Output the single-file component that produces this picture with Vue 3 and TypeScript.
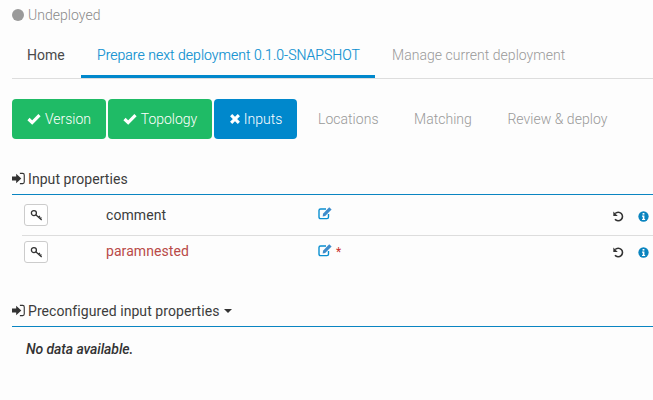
<template>
  <div class="page">
    <div class="status">
      <span class="status-dot"></span>
      <span>Undeployed</span>
    </div>

    <!-- Main tabs -->
    <nav class="tabs">
      <a
        v-for="tab in tabs"
        :key="tab.label"
        class="tab"
        :class="tab.state"
      >{{ tab.label }}</a>
    </nav>

    <!-- Wizard steps -->
    <div class="steps">
      <button class="step done">
        <svg class="step-icon" viewBox="0 0 14 14"><path d="M1.5 7 L5.2 10.6 L12.5 3.2" /></svg>Version
      </button>
      <button class="step done">
        <svg class="step-icon" viewBox="0 0 14 14"><path d="M1.5 7 L5.2 10.6 L12.5 3.2" /></svg>Topology
      </button>
      <button class="step current">
        <svg class="step-icon small" viewBox="0 0 14 14"><path d="M2.5 2.5 L11.5 11.5 M11.5 2.5 L2.5 11.5" /></svg>Inputs
      </button>
      <span v-for="name in pending" :key="name" class="step-pending">{{ name }}</span>
    </div>

    <!-- Input properties -->
    <h3 class="section-title">
      <svg class="signin" viewBox="0 0 14 14">
        <path class="arrow" d="M0 4.8 H4.5 V1.8 L10 7 L4.5 12.2 V9.2 H0 Z" />
        <path class="frame" d="M8.5 1.5 H11.5 Q13.2 1.5 13.2 3.2 V10.8 Q13.2 12.5 11.5 12.5 H8.5" />
      </svg>
      Input properties
    </h3>
    <div class="props">
      <div v-for="prop in props" :key="prop.name" class="prop-row">
        <span class="key-btn">
          <svg viewBox="0 0 14 14" class="key-icon">
            <circle cx="4.2" cy="4.4" r="2.7" />
            <path d="M6.2 6.3 L12.6 11.8 M9.2 8.9 L10.7 7.6 M11 10.4 L12.3 9.2" />
          </svg>
        </span>
        <span class="prop-name" :class="{ required: prop.required }">{{ prop.name }}</span>
        <span class="prop-edit">
          <svg viewBox="0 0 15 14" class="edit-icon">
            <path class="box" d="M10.5 8 V11 Q10.5 12.6 9 12.6 H2.6 Q1 12.6 1 11 V4.6 Q1 3 2.6 3 H8" />
            <path class="pen" d="M5 7.8 L11.2 1.2 L13.6 3.4 L7.2 10 L4.7 10.4 Z" />
          </svg>
          <span v-if="prop.required" class="star">*</span>
        </span>
        <svg viewBox="0 0 14 14" class="undo-icon">
          <path d="M3.4 3.8 A4.6 4.6 0 1 1 3.2 10" />
          <path class="head" d="M1.4 1.6 L1.4 6.4 L6.2 6.4 Z" />
        </svg>
        <svg viewBox="0 0 12 12" class="info-icon">
          <circle cx="6" cy="6" r="5.6" />
          <rect x="5" y="2.2" width="2" height="1.7" />
          <path d="M4.4 5 H7 V8.6 H7.8 V9.8 H4.4 V8.6 H5.2 V6.2 H4.4 Z" />
        </svg>
      </div>
    </div>

    <!-- Preconfigured input properties -->
    <h3 class="section-title second">
      <svg class="signin" viewBox="0 0 14 14">
        <path class="arrow" d="M0 4.8 H4.5 V1.8 L10 7 L4.5 12.2 V9.2 H0 Z" />
        <path class="frame" d="M8.5 1.5 H11.5 Q13.2 1.5 13.2 3.2 V10.8 Q13.2 12.5 11.5 12.5 H8.5" />
      </svg>
      Preconfigured input properties
      <span class="caret"></span>
    </h3>
    <p class="empty">No data available.</p>
  </div>
</template>

<script setup lang="ts">
type Tab = {
  label: string;
  state: string;
};

type InputProp = {
  name: string;
  required: boolean;
};

const tabs: Tab[] = [
  { label: "Home", state: "home" },
  { label: "Prepare next deployment 0.1.0-SNAPSHOT", state: "active" },
  { label: "Manage current deployment", state: "muted" },
];

const pending: string[] = ["Locations", "Matching", "Review & deploy"];

const props: InputProp[] = [
  { name: "comment", required: false },
  { name: "paramnested", required: true },
];
</script>

<style>
html,
body {
  background: #fdfdfd;
}
</style>

<style scoped>
.page {
  width: 653px;
  height: 400px;
  overflow: hidden;
  box-sizing: border-box;
  padding-left: 12px;
  font-family: Roboto, "Liberation Sans", sans-serif;
  font-size: 14px;
  letter-spacing: 0.03px;
  color: #333;
}

.status {
  display: flex;
  align-items: center;
  gap: 4px;
  height: 16px;
  padding-top: 7px;
  font-weight: 300;
  font-size: 14px;
  color: #8a8a8a;
}

.status-dot {
  width: 12px;
  height: 12px;
  border-radius: 50%;
  background: #9a9a9a;
}

.tabs {
  display: flex;
  height: 55px;
  border-bottom: 1px solid #ddd;
}

.tab {
  display: block;
  padding: 24px 17px 0 15px;
  height: 31px;
}

.tab.home {
  width: 37px;
  padding-right: 17px;
  color: #4a4a4a;
}

.tab.active {
  width: 264px;
  padding: 24px 14px 0 16px;
  height: 28px;
  color: #0a8fd0;
  font-weight: 300;
  -webkit-text-stroke: 0.15px #0a8fd0;
  border-bottom: 3px solid #0088cc;
}

.tab.muted {
  padding-left: 17px;
  color: #999;
  font-weight: 300;
}

.steps {
  display: flex;
  align-items: center;
  gap: 2px;
  margin-top: 20px;
  height: 40px;
}

.step {
  display: flex;
  align-items: center;
  justify-content: center;
  height: 40px;
  padding: 0;
  border: none;
  border-radius: 4px;
  font: inherit;
  font-weight: 300;
  color: #fff;
}

.step:nth-child(1) {
  width: 94px;
}

.step:nth-child(2) {
  width: 104px;
}

.step:nth-child(3) {
  width: 83px;
}

.step.done {
  background: #1fbb66;
}

.step.current {
  background: #0088cc;
}

.step-icon {
  width: 14px;
  height: 14px;
  margin-right: 4px;
  fill: none;
  stroke: #fff;
  stroke-width: 3.2;
}

.step-icon.small {
  width: 12px;
  height: 12px;
  margin-right: 3px;
  stroke-width: 3.6;
}

.step-pending {
  margin-left: 19px;
  margin-right: 14.5px;
  color: #999;
  font-weight: 300;
}

.section-title {
  display: flex;
  align-items: flex-start;
  margin: 32px 0 0;
  height: 23px;
  border-bottom: 1px solid #0a85c2;
  font-size: 14px;
  font-weight: 400;
  letter-spacing: 0.07px;
  color: #3c3c3c;
  line-height: 16px;
}

.section-title.second {
  margin-top: 35px;
}

.signin {
  width: 13px;
  height: 13px;
  margin: 1px 3px 0 0;
  flex: none;
}

.signin .arrow {
  fill: #333;
}

.signin .frame {
  fill: none;
  stroke: #333;
  stroke-width: 1.2;
}

.props {
  margin-left: 10px;
}

.prop-row {
  display: flex;
  align-items: center;
  height: 40px;
  border-bottom: 1px solid #ddd;
}

.prop-row:last-child {
  height: 32px;
  border-bottom: none;
}

.key-btn {
  display: flex;
  align-items: center;
  justify-content: center;
  width: 22px;
  height: 20px;
  margin-left: 2px;
  background: #fff;
  border: 1px solid #ccc;
  border-radius: 3px;
}

.key-icon {
  width: 13px;
  height: 13px;
  fill: none;
  stroke: #333;
  stroke-width: 1.4;
}

.prop-name {
  width: 212px;
  margin: -1px 0 0 58px;
  letter-spacing: 0.07px;
  color: #3c3c3c;
}

.prop-row:last-child .prop-name {
  margin-top: -2px;
}

.prop-name.required {
  color: #b94a48;
}

.prop-edit {
  display: flex;
  align-items: center;
  width: 294px;
}

.edit-icon {
  width: 15px;
  height: 14px;
  margin-top: -5px;
  fill: none;
}

.edit-icon .box {
  stroke: #0a8fd0;
  stroke-width: 1.4;
}

.edit-icon .pen {
  fill: #3f8ccb;
}

.star {
  margin-left: 3px;
  font-size: 12px;
  color: #c9302c;
}

.undo-icon {
  width: 13px;
  height: 13px;
  fill: none;
  stroke: #333;
  stroke-width: 1.7;
}

.info-icon {
  width: 11px;
  height: 11px;
  margin-left: 13px;
}

.prop-row:first-child .undo-icon,
.prop-row:first-child .info-icon {
  margin-top: 3px;
}

.undo-icon .head {
  fill: #333;
  stroke: none;
}

.info-icon circle {
  fill: #0a84bf;
}

.info-icon rect,
.info-icon path {
  fill: #fff;
}

.caret {
  width: 0;
  height: 0;
  margin: 6px 0 0 4px;
  border-left: 4px solid transparent;
  border-right: 4px solid transparent;
  border-top: 4px solid #333;
}

.empty {
  margin: 14px 0 0 14px;
  font-style: italic;
  font-weight: 500;
  letter-spacing: -0.08px;
  line-height: 16px;
  color: #333;
}
</style>
